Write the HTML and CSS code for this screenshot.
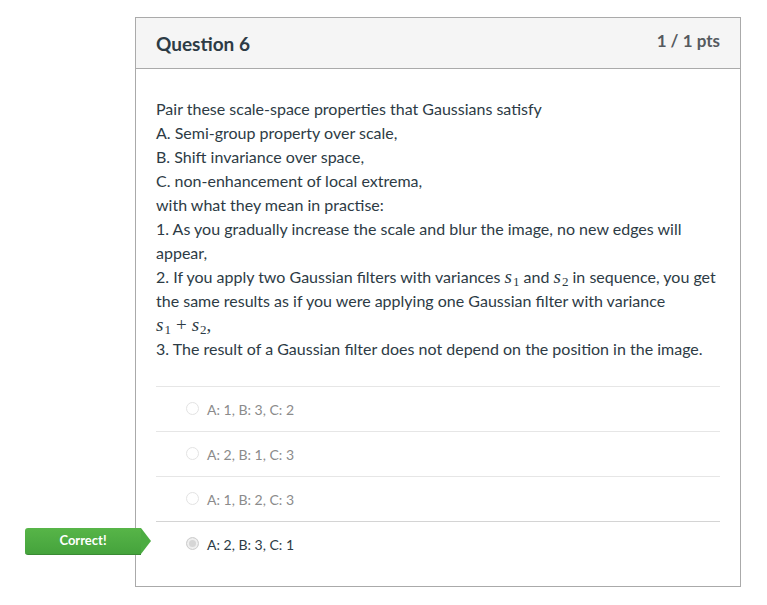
FILE: index.html
```html
<!DOCTYPE html>
<html>
<head>
<meta charset="utf-8">
<link rel="stylesheet" href="styles.css">
</head>
<body>
<div class="page">
  <div class="card">
    <div class="card-header">
      <h2 class="q-title">Question 6</h2>
      <div class="q-pts">1 / 1 pts</div>
    </div>
    <div class="card-body">
      <div class="q-text">
        <div>Pair these scale-space properties that Gaussians satisfy</div>
        <div>A. Semi-group property over scale,</div>
        <div>B. Shift invariance over space,</div>
        <div>C. non-enhancement of local extrema,</div>
        <div>with what they mean in practise:</div>
        <div>1. As you gradually increase the scale and blur the image, no new edges will appear,</div>
        <div>2. If you apply two Gaussian filters with variances <span class="m"><i>s</i><sub>1</sub></span> and <span class="m"><i>s</i><sub>2</sub></span> in sequence, you get the same results as if you were applying one Gaussian filter with variance</div>
        <div><span class="m"><i>s</i><sub>1</sub><span class="op">+</span><i>s</i><sub>2</sub>,</span></div>
        <div>3. The result of a Gaussian filter does not depend on the position in the image.</div>
      </div>
      <div class="answers">
        <div class="answer"><span class="radio"></span><span class="a-text">A: 1, B: 3, C: 2</span></div>
        <div class="answer"><span class="radio"></span><span class="a-text">A: 2, B: 1, C: 3</span></div>
        <div class="answer"><span class="radio"></span><span class="a-text">A: 1, B: 2, C: 3</span></div>
        <div class="answer selected"><span class="radio checked"></span><span class="a-text">A: 2, B: 3, C: 1</span>
          <div class="badge">Correct!</div>
        </div>
      </div>
    </div>
  </div>
</div>
</body>
</html>
```
FILE: styles.css
```css
html, body {
  margin: 0;
  padding: 0;
  background: #fff;
}
body {
  font-family: Lato, "Noto Sans", sans-serif;
  color: #2d3b45;
}
.page {
  padding: 17px 26px 0 135px;
}
.card {
  width: 604px;
  border: 1px solid #aaaaaa;
  position: relative;
}
.card-header {
  height: 50px;
  background: #f5f5f5;
  border-bottom: 1px solid #aaaaaa;
  display: flex;
  align-items: center;
  justify-content: space-between;
  padding: 0 20px;
}
.q-title {
  margin: 0;
  font-size: 19px;
  font-weight: 700;
  color: #2d3b45;
}
.q-pts {
  font-size: 17px;
  font-weight: 700;
  color: #555a5f;
  align-self: flex-start;
  margin-top: 12px;
}
.card-body {
  padding: 28px 20px 20px 20px;
}
.q-text {
  font-size: 16px;
  line-height: 24px;
  color: #2d3b45;
}
.m {
  font-family: "Liberation Serif", serif;
  font-size: 19px;
  line-height: 0;
}
.m i {
  font-family: "Liberation Serif", serif;
  font-size: 19px;
}
.m sub {
  font-size: 13px;
  vertical-align: -3px;
  line-height: 0;
  margin-left: 1px;
}
.op {
  margin: 0 5px;
}
.answers {
  margin-top: 25px;
}
.answer {
  position: relative;
  border-top: 1px solid #e6e6e6;
  height: 43px;
  display: flex;
  align-items: center;
  padding-left: 30px;
  padding-top: 1px;
}
.answer.selected {
  border-top-color: #d4d4d4;
}
.radio {
  width: 11px;
  height: 11px;
  border: 1px solid #e3e3e3;
  border-radius: 50%;
  background: #fff;
  margin-right: 8px;
  margin-top: -2px;
  box-sizing: content-box;
}
.radio.checked {
  background: #d6d6d6;
  border-color: #cfcfcf;
  box-shadow: inset 0 0 0 2px #efefef;
}
.a-text {
  font-size: 14px;
  color: #8b8b8b;
}
.selected .a-text {
  color: #2d3b45;
}
.badge {
  position: absolute;
  left: -131px;
  top: 6px;
  width: 116px;
  height: 27px;
  background: linear-gradient(#57b548, #45a33c);
  border-radius: 3px 0 0 3px;
  border-bottom: 1px solid #3a8a33;
  color: #fff;
  font-size: 13px;
  font-weight: 700;
  display: flex;
  align-items: center;
  justify-content: center;
  box-sizing: border-box;
  padding-bottom: 3px;
}
.badge::after {
  content: "";
  position: absolute;
  right: -10px;
  top: 0;
  border-top: 13.5px solid transparent;
  border-bottom: 13.5px solid transparent;
  border-left: 10px solid #4cac42;
}
```
